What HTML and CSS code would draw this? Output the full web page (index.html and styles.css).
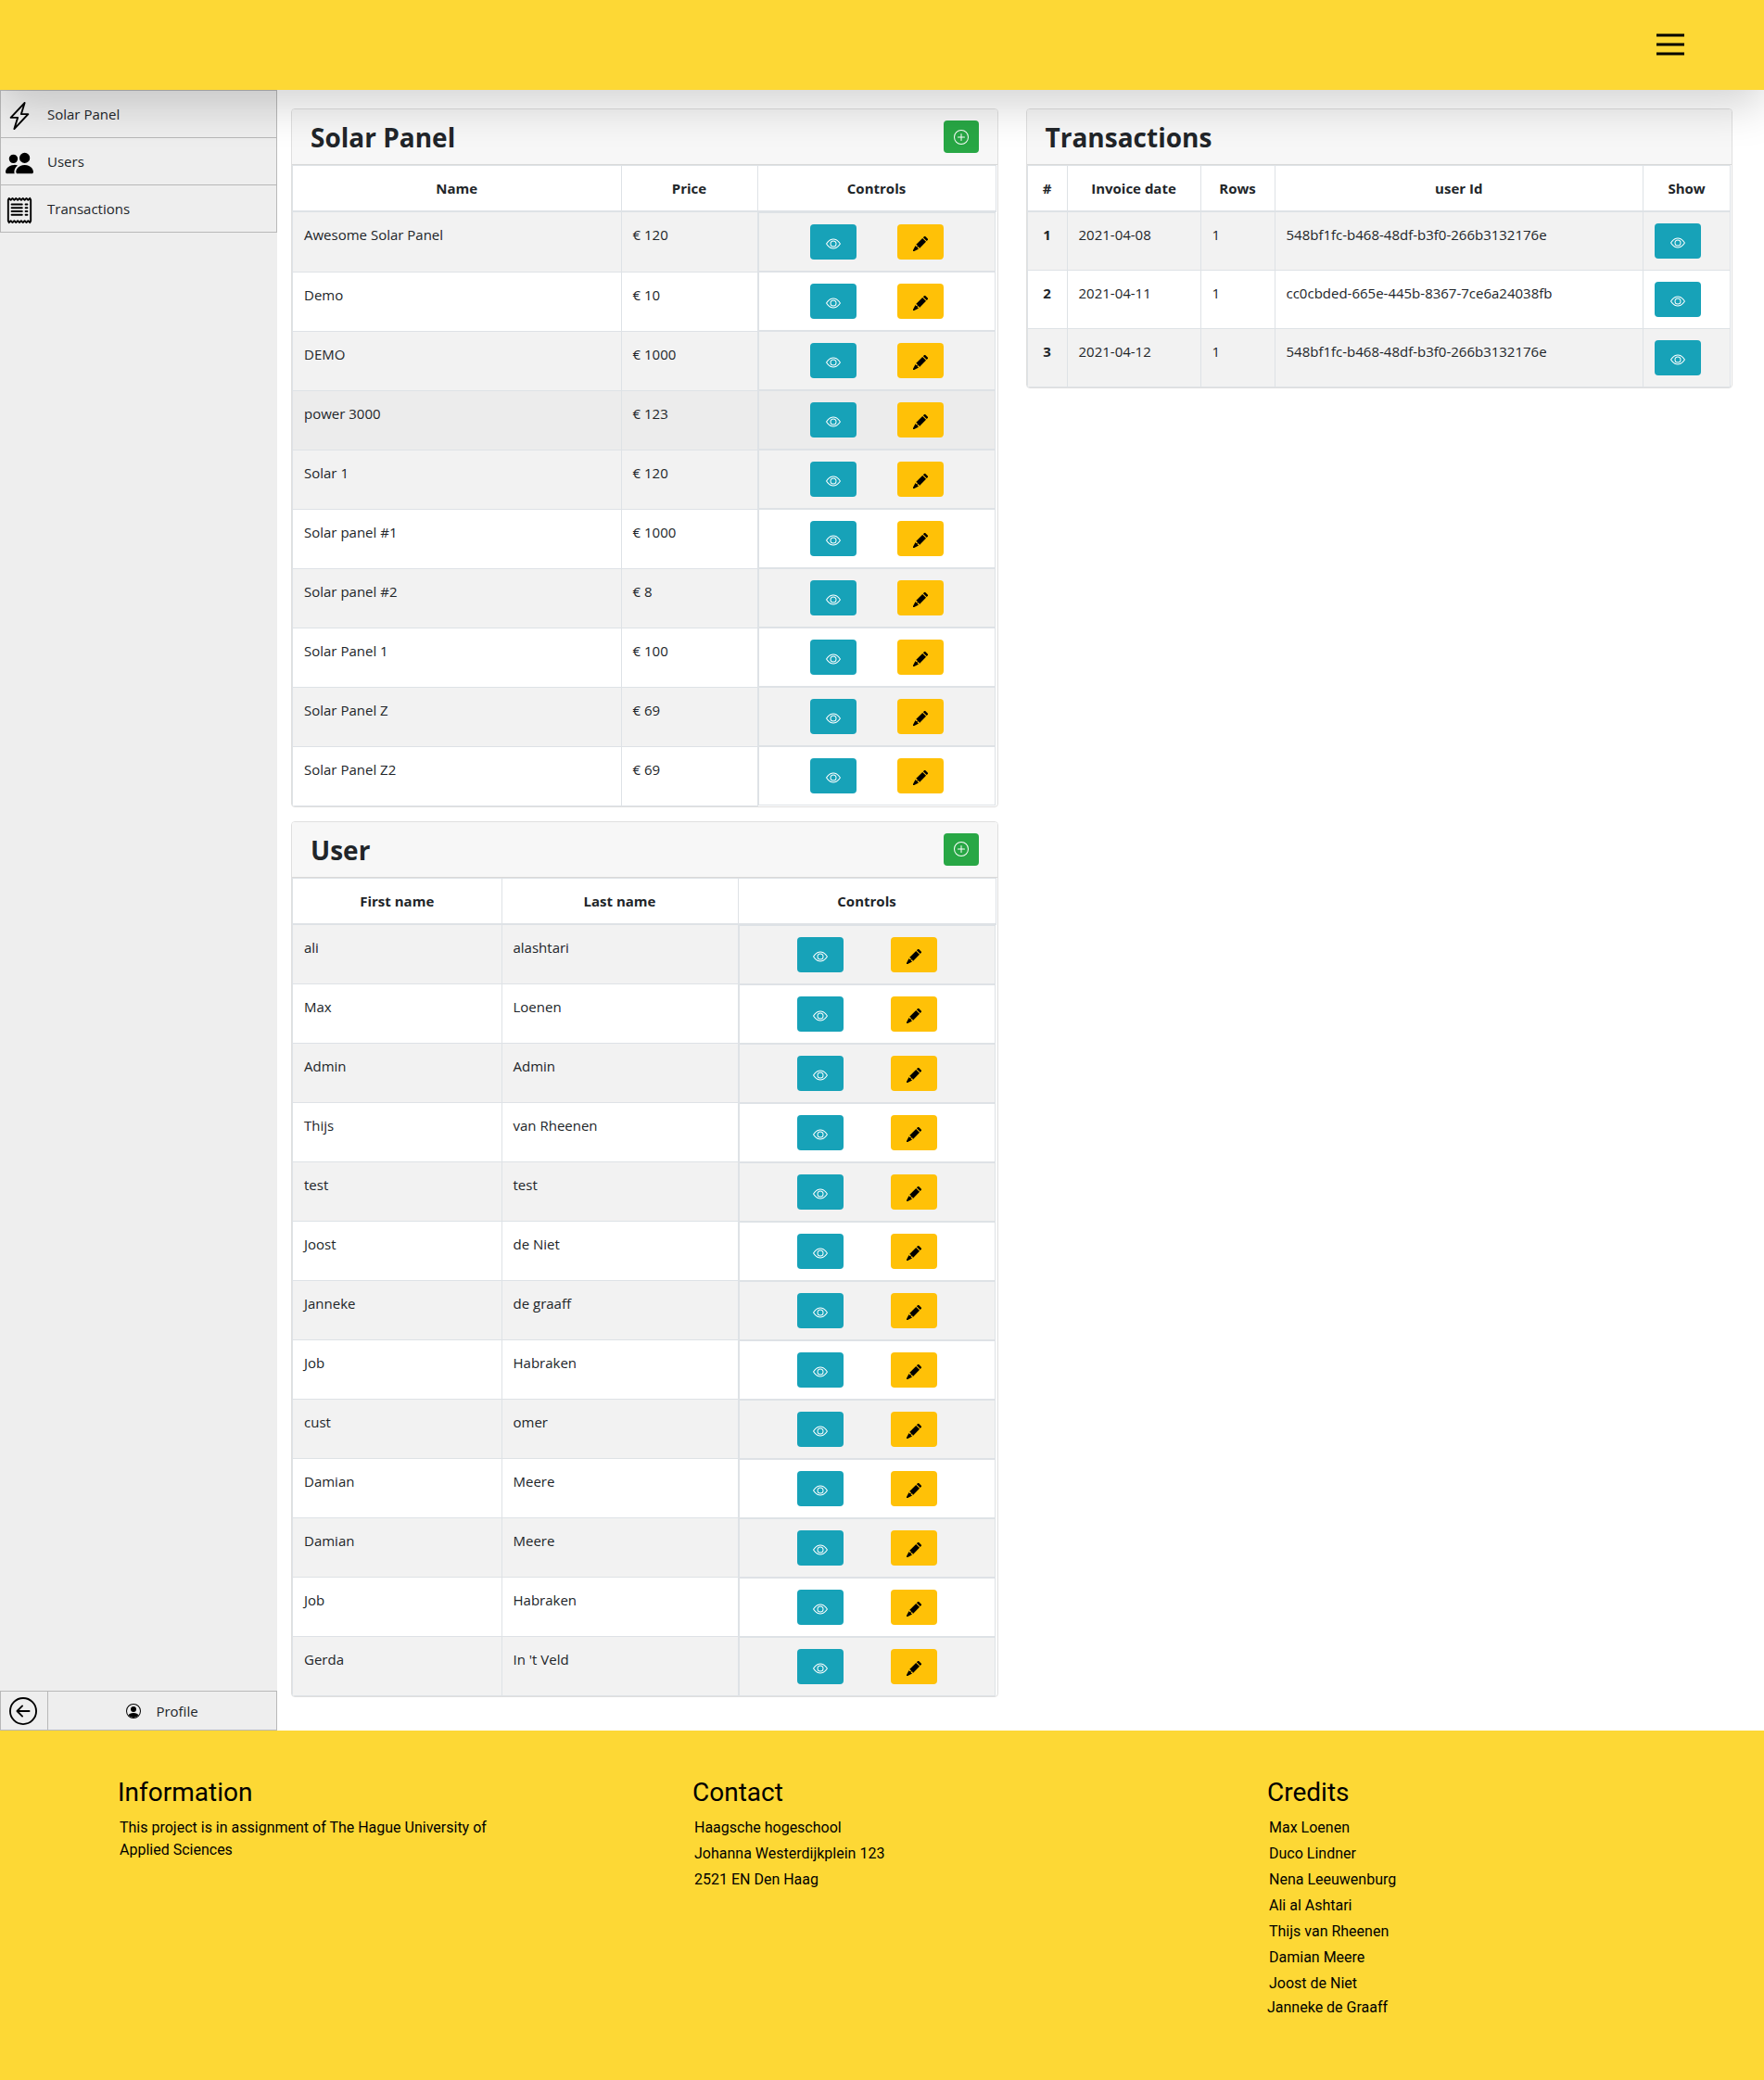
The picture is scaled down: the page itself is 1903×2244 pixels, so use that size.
FILE: index.html
```html
<!DOCTYPE html>
<html lang="en">
<head>
<meta charset="utf-8">
<title>Dashboard</title>
<link rel="stylesheet" href="styles.css">
</head>
<body>
<svg class="sprite" aria-hidden="true">
  <symbol id="eye" viewBox="0 0 16 16"><path fill-rule="evenodd" d="M16 8s-3-5.500-8-5.500S0 8 0 8s3 5.500 8 5.500S16 8 16 8zM1.173 8a13.134 13.134 0 0 0 1.660 2.043C4.120 11.332 5.880 12.500 8 12.500c2.120 0 3.879-1.168 5.168-2.457A13.134 13.134 0 0 0 14.828 8a13.133 13.133 0 0 0-1.660-2.043C11.879 4.668 10.119 3.500 8 3.500c-2.120 0-3.879 1.168-5.168 2.457A13.133 13.133 0 0 0 1.172 8z"/><path fill-rule="evenodd" d="M8 5.500a2.500 2.500 0 1 0 0 5 2.500 2.500 0 0 0 0-5zM4.500 8a3.500 3.500 0 1 1 7 0 3.500 3.500 0 0 1-7 0z"/></symbol>
  <symbol id="pencil" viewBox="0 0 16 16"><g transform="translate(8 8) rotate(-45)"><path d="M6.800-2.700h1.400a1.100 1.100 0 0 1 1.100 1.100v3.200a1.100 1.100 0 0 1-1.100 1.100h-1.400zM-4.200-2.700h10v5.400h-10l.6-1.500-1-1.200 1-1.200zM-5.200-2.500l-.4 1.300 1 1.200-1 1.200.4 1.300-5.200-1.700a.8.8 0 0 1 0-1.600z"/></g></symbol>
  <symbol id="plus" viewBox="0 0 16 16"><path fill-rule="evenodd" d="M8 15A7 7 0 1 0 8 1a7 7 0 0 0 0 14zm0 1A8 8 0 1 0 8 0a8 8 0 0 0 0 16z"/><path d="M8 4a.5.5 0 0 1 .5.5v3h3a.5.5 0 0 1 0 1h-3v3a.5.5 0 0 1-1 0v-3h-3a.5.5 0 0 1 0-1h3v-3A.5.5 0 0 1 8 4z"/></symbol>
</svg>

<header class="topbar">
  <button class="menu-button" type="button" aria-label="Menu">
    <svg width="30" height="24" viewBox="0 0 30 24" stroke="#000" stroke-width="3"><path d="M0 2h30M0 12h30M0 22h30"/></svg>
  </button>
</header>

<div class="layout">
  <nav class="sidebar">
    <ul class="menu">
      <li><a class="menu-link" href="#solar">
        <svg class="menu-icon" viewBox="0 0 16 16"><path fill-rule="evenodd" d="M11.251.068a.5.5 0 0 1 .227.58L9.677 6.500H13a.5.5 0 0 1 .364.843l-8 8.500a.5.5 0 0 1-.842-.49L6.323 9.500H3a.5.5 0 0 1-.364-.843l8-8.500a.5.5 0 0 1 .615-.09zM4.157 8.500H7a.5.5 0 0 1 .478.647L6.110 13.590l5.732-6.090H9a.5.5 0 0 1-.478-.647L9.890 2.410 4.157 8.500z"/></svg>
        Solar Panel</a></li>
      <li><a class="menu-link" href="#users">
        <svg class="menu-icon" viewBox="0 0 16 16"><path d="M7 14s-1 0-1-1 1-4 5-4 5 3 5 4-1 1-1 1H7zm4-6a3 3 0 1 0 0-6 3 3 0 0 0 0 6z"/><path d="M5.216 14A2.238 2.238 0 0 1 5 13c0-1.355.68-2.750 1.936-3.720A6.325 6.325 0 0 0 5 9c-4 0-5 3-5 4s1 1 1 1h4.216zM4.500 8a2.500 2.500 0 1 0 0-5 2.500 2.500 0 0 0 0 5z"/></svg>
        Users</a></li>
      <li><a class="menu-link" href="#transactions">
        <svg class="menu-icon" viewBox="0 0 16 16"><path fill-rule="evenodd" d="M1.920.506a.5.5 0 0 1 .434.14L3 1.293l.646-.647a.5.5 0 0 1 .708 0L5 1.293l.646-.647a.5.5 0 0 1 .708 0L7 1.293l.646-.647a.5.5 0 0 1 .708 0L9 1.293l.646-.647a.5.5 0 0 1 .708 0l.646.647.646-.647a.5.5 0 0 1 .708 0l.646.647.646-.647a.5.5 0 0 1 .801.13l.5 1A.5.5 0 0 1 15 2v12a.5.5 0 0 1-.053.224l-.5 1a.5.5 0 0 1-.8.13L13 14.707l-.646.647a.5.5 0 0 1-.708 0L11 14.707l-.646.647a.5.5 0 0 1-.708 0L9 14.707l-.646.647a.5.5 0 0 1-.708 0L7 14.707l-.646.647a.5.5 0 0 1-.708 0L5 14.707l-.646.647a.5.5 0 0 1-.708 0L3 14.707l-.646.647a.5.5 0 0 1-.801-.13l-.5-1A.5.5 0 0 1 1 14V2a.5.5 0 0 1 .053-.224l.5-1a.5.5 0 0 1 .367-.27zm.217 1.338L2 2.118v11.764l.137.274.51-.51a.5.5 0 0 1 .707 0l.646.647.646-.646a.5.5 0 0 1 .708 0l.646.646.646-.646a.5.5 0 0 1 .708 0l.646.646.646-.646a.5.5 0 0 1 .708 0l.646.646.646-.646a.5.5 0 0 1 .708 0l.646.646.646-.646a.5.5 0 0 1 .708 0l.509.509.137-.274V2.118l-.137-.274-.51.51a.5.5 0 0 1-.707 0L12 1.707l-.646.647a.5.5 0 0 1-.708 0L10 1.707l-.646.647a.5.5 0 0 1-.708 0L8 1.707l-.646.647a.5.5 0 0 1-.708 0L6 1.707l-.646.647a.5.5 0 0 1-.708 0L4 1.707l-.646.647a.5.5 0 0 1-.708 0l-.509-.51z"/><path d="M3.500 4.500h6M3.500 6.500h6M3.500 8.500h6M3.500 10.500h6M11.500 4.500h1M11.500 6.500h1M11.500 8.500h1M11.500 10.500h1" stroke="#000" stroke-linecap="round"/></svg>
        Transactions</a></li>
    </ul>
    <div class="sidebar-foot">
      <button class="back-button" type="button" aria-label="Back">
        <svg width="30" height="30" viewBox="0 0 16 16"><path fill-rule="evenodd" d="M8 15A7 7 0 1 0 8 1a7 7 0 0 0 0 14zm0 1A8 8 0 1 0 8 0a8 8 0 0 0 0 16z"/><path d="M7.500 5l-3 3 3 3M4.500 8h7" fill="none" stroke="#000" stroke-linecap="round" stroke-linejoin="round"/></svg>
      </button>
      <a class="profile-link" href="#profile">
        <svg width="16" height="16" viewBox="0 0 16 16"><path d="M13.468 12.370C12.758 11.226 11.195 10 8 10s-4.757 1.225-5.468 2.370A6.987 6.987 0 0 0 8 15a6.987 6.987 0 0 0 5.468-2.630z"/><path d="M8 9a3 3 0 1 0 0-6 3 3 0 0 0 0 6z"/><path fill-rule="evenodd" d="M8 1a7 7 0 1 0 0 14A7 7 0 0 0 8 1zM0 8a8 8 0 1 1 16 0A8 8 0 0 1 0 8z"/></svg>
        Profile</a>
    </div>
  </nav>

  <main class="content">
    <div class="column">
      <section class="card" id="solar">
        <div class="card-header"><h2 class="card-title">Solar Panel</h2><button class="btn btn-add" type="button" aria-label="Add solar panel"><svg class="icon"><use href="#plus"/></svg></button></div>
        <table class="table">
          <colgroup><col><col class="c-price"><col class="c-panel-controls"></colgroup>
          <thead><tr><th>Name</th><th>Price</th><th>Controls</th></tr></thead>
          <tbody id="solar-rows"></tbody>
        </table>
      </section>
      <section class="card" id="users">
        <div class="card-header"><h2 class="card-title">User</h2><button class="btn btn-add" type="button" aria-label="Add user"><svg class="icon"><use href="#plus"/></svg></button></div>
        <table class="table">
          <colgroup><col><col class="c-last"><col class="c-user-controls"></colgroup>
          <thead><tr><th>First name</th><th>Last name</th><th>Controls</th></tr></thead>
          <tbody id="user-rows"></tbody>
        </table>
      </section>
    </div>
    <div class="column">
      <section class="card" id="transactions">
        <div class="card-header"><h2 class="card-title">Transactions</h2></div>
        <table class="table">
          <colgroup><col class="c-num"><col class="c-date"><col class="c-rows"><col><col class="c-show"></colgroup>
          <thead><tr><th>#</th><th>Invoice date</th><th>Rows</th><th>user Id</th><th>Show</th></tr></thead>
          <tbody>
            <tr><th scope="row">1</th><td>2021-04-08</td><td>1</td><td>548bf1fc-b468-48df-b3f0-266b3132176e</td><td><button class="btn btn-view" type="button" aria-label="Show"><svg class="icon"><use href="#eye"/></svg></button></td></tr>
            <tr><th scope="row">2</th><td>2021-04-11</td><td>1</td><td>cc0cbded-665e-445b-8367-7ce6a24038fb</td><td><button class="btn btn-view" type="button" aria-label="Show"><svg class="icon"><use href="#eye"/></svg></button></td></tr>
            <tr><th scope="row">3</th><td>2021-04-12</td><td>1</td><td>548bf1fc-b468-48df-b3f0-266b3132176e</td><td><button class="btn btn-view" type="button" aria-label="Show"><svg class="icon"><use href="#eye"/></svg></button></td></tr>
          </tbody>
        </table>
      </section>
    </div>
  </main>
</div>

<footer class="footer">
  <section class="footer-col"><h3>Information</h3><ul><li>This project is in assignment of The Hague University of Applied Sciences</li></ul></section>
  <section class="footer-col"><h3>Contact</h3><ul><li>Haagsche hogeschool</li><li>Johanna Westerdijkplein 123</li><li>2521 EN Den Haag</li></ul></section>
  <section class="footer-col"><h3>Credits</h3><ul><li>Max Loenen</li><li>Duco Lindner</li><li>Nena Leeuwenburg</li><li>Ali al Ashtari</li><li>Thijs van Rheenen</li><li>Damian Meere</li><li>Joost de Niet</li></ul><p>Janneke de Graaff</p></section>
</footer>
<script src="app.js"></script>
</body>
</html>
```
FILE: styles.css
```css
* { box-sizing: border-box; }
body {
  margin: 0;
  min-height: 100vh;
  display: flex;
  flex-direction: column;
  font: 15px/24px "Open Sans", "Noto Sans", sans-serif;
  color: #212529;
  background: #fff;
}
ul, h2, h3, p { margin: 0; padding: 0; list-style: none; }
a { color: inherit; text-decoration: none; }
button { font: inherit; border: 0; padding: 0; background: none; cursor: pointer; }
svg { display: block; }
.sprite { position: absolute; width: 0; height: 0; }

.topbar {
  position: relative;
  z-index: 2;
  display: flex;
  justify-content: flex-end;
  align-items: center;
  height: 97px;
  padding: 0 86px 1px 0;
  background: #fdd835;
  box-shadow: 0 16px 48px rgba(0, 0, 0, .175);
}

.layout { display: flex; }
.sidebar {
  display: flex;
  flex-direction: column;
  justify-content: space-between;
  width: 299px;
  flex: none;
  background: #eee;
}
.menu { border: 1px solid #b8b8b8; }
.menu li + li { border-top: 1px solid #b8b8b8; }
.menu-link { display: flex; gap: 15px; height: 50px; padding-left: 5px; line-height: 50px; }
.menu-icon { width: 30px; height: 30px; margin-top: 12px; }
.sidebar-foot { display: flex; height: 43px; border: 1px solid #b8b8b8; }
.back-button { display: flex; align-items: center; padding: 0 11px 0 9px; border-right: 1px solid #b8b8b8; }
.profile-link { flex: 1; display: flex; justify-content: center; align-items: center; gap: 16px; }

.content { flex: 1; display: flex; gap: 30px; padding: 20px 34px 36px 15px; }
.column { flex: 1; display: flex; flex-direction: column; gap: 15px; min-width: 0; }
.card { border: 1px solid #dfdfdf; border-radius: 4px; overflow: hidden; padding-right: 1px; }
.card-header {
  display: flex;
  justify-content: space-between;
  align-items: flex-start;
  height: 60px;
  margin-right: -1px;
  padding: 12px 20px;
  background: #f7f7f7;
  border-bottom: 1px solid #d9d9d9;
}
.card-title { font-size: 28px; font-weight: 700; line-height: 36px; }

.table { width: 100%; table-layout: fixed; border-collapse: collapse; }
.table th, .table td { padding: 12px; border: 1px solid #dee2e6; text-align: left; vertical-align: top; }
.table thead th { border-bottom-width: 2px; text-align: center; }
.table tbody th { text-align: center; }
.table tbody tr:nth-child(odd) { background: #f2f2f2; }
.table tbody tr.active { background: #ececec; }
.table td.controls { display: flex; justify-content: space-evenly; }
.c-price { width: 147px; }
.c-panel-controls { width: 257px; }
.c-last { width: 255px; }
.c-user-controls { width: 278px; }
.c-num { width: 43px; }
.c-date { width: 144px; }
.c-rows { width: 80px; }
.c-show { width: 94px; }

.btn { display: flex; justify-content: center; align-items: center; border-radius: 4px; color: #fff; }
.icon { width: 16px; height: 16px; fill: currentColor; }
.btn-add { width: 38px; height: 35px; background: #28a745; }
.btn-view, .btn-edit { width: 50px; height: 38px; padding-top: 4px; }
.btn-view { background: #17a2b8; }
.btn-edit { background: #ffc107; color: #000; }

.footer {
  flex: 1;
  display: flex;
  padding: 49px 0 56px 127px;
  background: #fdd835;
  color: #000;
  font: 16px/24px Roboto, sans-serif;
}
.footer-col { flex: 0 0 620px; padding-right: 200px; }
.footer h3 { font-size: 28px; font-weight: 400; line-height: 36px; margin-bottom: 6px; }
.footer li { padding: 2px; }
@media (max-width: 1600px) {
  .footer-col { flex: 1 1 0; padding-right: 32px; }
}
```
FILE: app.js
```js
const panels = [
  ["Awesome Solar Panel", "€ 120"], ["Demo", "€ 10"], ["DEMO", "€ 1000"], ["power 3000", "€ 123"],
  ["Solar 1", "€ 120"], ["Solar panel #1", "€ 1000"], ["Solar panel #2", "€ 8"],
  ["Solar Panel 1", "€ 100"], ["Solar Panel Z", "€ 69"], ["Solar Panel Z2", "€ 69"]
];
const users = [
  ["ali", "alashtari"], ["Max", "Loenen"], ["Admin", "Admin"], ["Thijs", "van Rheenen"],
  ["test", "test"], ["Joost", "de Niet"], ["Janneke", "de graaff"], ["Job", "Habraken"],
  ["cust", "omer"], ["Damian", "Meere"], ["Damian", "Meere"], ["Job", "Habraken"], ["Gerda", "In 't Veld"]
];
const controls = `<td class="controls">
  <button class="btn btn-view" type="button" aria-label="Show"><svg class="icon"><use href="#eye"/></svg></button>
  <button class="btn btn-edit" type="button" aria-label="Edit"><svg class="icon"><use href="#pencil"/></svg></button></td>`;

function fill(id, rows, active) {
  document.getElementById(id).innerHTML = rows.map((r, i) =>
    `<tr${i === active ? ' class="active"' : ""}><td>${r[0]}</td><td>${r[1]}</td>${controls}</tr>`).join("");
}
fill("solar-rows", panels, 3);
fill("user-rows", users, -1);
```
